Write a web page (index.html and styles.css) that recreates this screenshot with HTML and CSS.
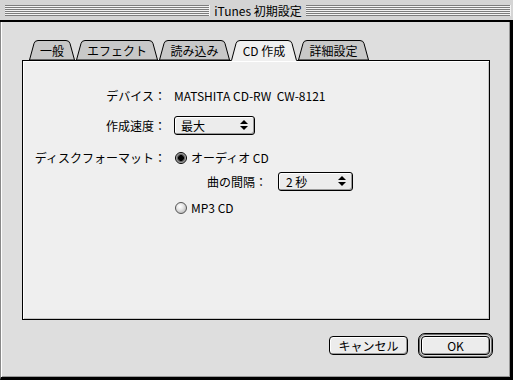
FILE: index.html
```html
<!DOCTYPE html>
<html lang="ja">
<head>
<meta charset="utf-8">
<title>iTunes 初期設定</title>
<link rel="stylesheet" href="styles.css">
</head>
<body>
<div class="window">
  <div class="titlebar">
    <div class="stripes"></div>
    <div class="title">iTunes 初期設定</div>
    <div class="stripes"></div>
  </div>
  <div class="content">
    <div class="tabs">
      <div class="tab t1">
        <svg class="tab-shape" width="46" height="21" viewBox="0 0 46 21"><path d="M0.5 20 L5 3.5 Q5.8 0.5 9 0.5 L37 0.5 Q40.2 0.5 41 3.5 L45.5 20 Z" /></svg>
        <span class="tab-label">一般</span>
      </div>
      <div class="tab t2">
        <svg class="tab-shape" width="82" height="21" viewBox="0 0 82 21"><path d="M0.5 20 L5 3.5 Q5.8 0.5 9 0.5 L73 0.5 Q76.2 0.5 77 3.5 L81.5 20 Z" /></svg>
        <span class="tab-label">エフェクト</span>
      </div>
      <div class="tab t3">
        <svg class="tab-shape" width="71" height="21" viewBox="0 0 71 21"><path d="M0.5 20 L5 3.5 Q5.8 0.5 9 0.5 L62 0.5 Q65.2 0.5 66 3.5 L70.5 20 Z" /></svg>
        <span class="tab-label">読み込み</span>
      </div>
      <div class="tab t4 active">
        <svg class="tab-shape" width="66" height="21" viewBox="0 0 66 21"><path class="fill" d="M0 21 L0.5 20.5 L5 3.5 Q5.8 0.5 9 0.5 L57 0.5 Q60.2 0.5 61 3.5 L65.5 20.5 L66 21 Z" /><path class="edge" d="M0.5 20.5 L5 3.5 Q5.8 0.5 9 0.5 L57 0.5 Q60.2 0.5 61 3.5 L65.5 20.5" /></svg>
        <span class="tab-label">CD 作成</span>
      </div>
      <div class="tab t5">
        <svg class="tab-shape" width="71" height="21" viewBox="0 0 71 21"><path d="M0.5 20 L5 3.5 Q5.8 0.5 9 0.5 L62 0.5 Q65.2 0.5 66 3.5 L70.5 20 Z" /></svg>
        <span class="tab-label">詳細設定</span>
      </div>
    </div>
    <div class="panel">
      <div class="row r1">
        <div class="label">デバイス：</div>
        <div class="value">MATSHITA CD-RW&nbsp; CW-8121</div>
      </div>
      <div class="row r2">
        <div class="label">作成速度：</div>
        <div class="popup p1">
          <span>最大</span>
          <svg class="arrows" width="8" height="11" viewBox="0 0 8 11"><path d="M4 0 L8 4 L0 4 Z M0 6 L8 6 L4 10 Z" /></svg>
        </div>
      </div>
      <div class="row r3">
        <div class="label">ディスクフォーマット：</div>
        <div class="options">
          <div class="radio-row"><span class="radio on"></span><span>オーディオ CD</span></div>
          <div class="sub">
            <span class="sublabel">曲の間隔：</span>
            <div class="popup p2">
              <span>2 秒</span>
              <svg class="arrows" width="8" height="11" viewBox="0 0 8 11"><path d="M4 0 L8 4 L0 4 Z M0 6 L8 6 L4 10 Z" /></svg>
            </div>
          </div>
          <div class="radio-row r-mp3"><span class="radio"></span><span>MP3 CD</span></div>
        </div>
      </div>
    </div>
    <div class="footer">
      <button class="btn cancel">キャンセル</button>
      <div class="default-ring"><button class="btn ok">OK</button></div>
    </div>
  </div>
</div>
</body>
</html>
```

FILE: styles.css
```css
html, body {
  margin: 0;
  padding: 0;
  background: #dedede;
}

body {
  font-family: "Noto Sans CJK JP", "Noto Sans", sans-serif;
  font-size: 12px;
  color: #000;
}

.window {
  width: 513px;
  height: 380px;
  box-sizing: border-box;
  background: #dedede;
  border-left: 1px solid #888;
  border-right: 3px solid #000;
  border-bottom: 3px solid #000;
  box-shadow: inset 1px 0 0 #fff, inset -1px -1px 0 #999;
  display: flex;
  flex-direction: column;
}

.titlebar {
  height: 20px;
  box-sizing: border-box;
  border-bottom: 2px solid #000;
  background: #d4d4d4;
  display: flex;
  align-items: center;
  padding: 1px 2px 0 4px;
  margin-right: -3px;
  margin-left: -1px;
  padding-left: 5px;
  height: 22px;
}

.stripes {
  flex: 1;
  height: 11px;
  background: repeating-linear-gradient(to bottom, #7c7c7c 0 1px, #f2f2f2 1px 2px);
  border-right: 1px solid #f2f2f2;
}

.title {
  padding: 0 4px 0 4px;
  line-height: 16px;
  white-space: nowrap;
}

.content {
  flex: 1;
  padding: 18px 20px 0 21px;
  display: flex;
  flex-direction: column;
}

.tabs {
  display: flex;
  gap: 1px;
  margin-left: 7px;
  height: 21px;
  margin-bottom: -1px;
  position: relative;
  z-index: 1;
}

.tab {
  position: relative;
  height: 21px;
  display: flex;
  align-items: center;
  justify-content: center;
}

.t1 { width: 46px; }
.t2 { width: 82px; }
.t3 { width: 71px; }
.t4 { width: 66px; }
.t5 { width: 71px; }

.tab-shape {
  position: absolute;
  left: 0;
  top: 0;
}

.tab-shape path {
  fill: #c8c8c8;
  stroke: #000;
  stroke-width: 1;
}

.tab.active .tab-shape .fill {
  fill: #efefef;
  stroke: none;
}

.tab.active .tab-shape .edge {
  fill: none;
  stroke: #000;
}

.tab-label {
  position: relative;
  line-height: 14px;
  margin-top: 0px;
  white-space: nowrap;
}

.panel {
  width: 468px;
  height: 260px;
  box-sizing: border-box;
  border: 1px solid #000;
  background: #efefef;
  box-shadow: inset 1px 1px 0 #fff, inset -1px -1px 0 #c6c6c6;
  padding-top: 25px;
}

.row {
  display: flex;
  align-items: center;
}

.r2 { margin-top: 11px; }
.r3 { margin-top: 13px; align-items: flex-start; }

.label {
  width: 143px;
  flex: none;
  text-align: right;
  line-height: 19px;
  white-space: nowrap;
}

.value {
  margin-left: 8px;
  line-height: 19px;
}

.popup {
  margin-left: 8px;
  height: 19px;
  box-sizing: border-box;
  border: 1px solid #000;
  border-radius: 3px;
  background: #ececec;
  box-shadow: inset 1px 1px 0 #fff, inset -1px -1px 0 #9a9a9a;
  display: flex;
  align-items: center;
  justify-content: space-between;
  padding: 0 6px 0 6px;
}

.p1 { width: 81px; }
.p2 { width: 75px; margin-left: 11px; padding-left: 7px; }

.popup span {
  line-height: 17px;
}

.arrows path {
  fill: #000;
}

.options {
  margin-left: 8px;
  display: flex;
  flex-direction: column;
}

.radio-row {
  height: 19px;
  display: flex;
  align-items: center;
  gap: 4px;
}

.radio {
  width: 12px;
  height: 12px;
  box-sizing: border-box;
  border-radius: 50%;
  margin-left: 1px;
  border: 1px solid #555;
  background: radial-gradient(circle at 40% 35%, #ffffff 0, #e8e8e8 35%, #a8a8a8 100%);
}

.radio.on {
  border-color: #000;
  background: radial-gradient(circle at 50% 50%, #000 0 2.6px, #444 3px, #8a8a8a 4.2px, #cfcfcf 5px);
}

.sub {
  margin-top: 5px;
  padding-left: 33px;
  display: flex;
  align-items: center;
  height: 19px;
}

.sublabel {
  width: 60px;
  white-space: nowrap;
}

.r-mp3 { margin-top: 7px; }

.footer {
  margin-top: 13px;
  margin-right: -3px;
  display: flex;
  justify-content: flex-end;
  align-items: center;
  gap: 10px;
}

.btn {
  font-family: inherit;
  font-size: 12px;
  color: #000;
  height: 19px;
  box-sizing: border-box;
  border: 1px solid #000;
  border-radius: 4px;
  background: #ececec;
  box-shadow: inset 1px 1px 0 #fff, inset -1px -1px 0 #9a9a9a;
  padding: 0;
  line-height: 16px;
  margin: 0;
}

.cancel { width: 79px; }

.default-ring {
  width: 75px;
  height: 25px;
  box-sizing: border-box;
  border: 1px solid #000;
  border-radius: 7px;
  background: #dedede;
  box-shadow: inset 0 0 0 1px #6e6e6e;
  padding: 2px;
  display: flex;
}

.ok { width: 69px; }
```
